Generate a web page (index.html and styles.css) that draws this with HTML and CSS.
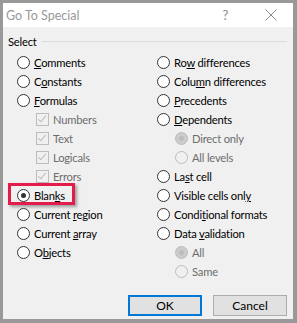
FILE: index.html
```html
<!DOCTYPE html>
<html lang="en">
<head>
    <meta charset="UTF-8">
    <title>Go To Special</title>
    <link rel="stylesheet" href="styles.css">
</head>
<body>
    <div class="window">
        <div class="titlebar">
            <span class="title">Go To Special</span>
            <span class="help">?</span>
            <svg class="close" width="12" height="12" viewBox="0 0 12 12">
                <path d="M0.5 0.5 L11.5 11.5 M11.5 0.5 L0.5 11.5" stroke="#8a8a8a" stroke-width="1" fill="none"/>
            </svg>
        </div>
        <div class="content">
            <div class="group-head">
                <span>Select</span>
                <div class="rule"></div>
            </div>
            <div class="columns">
                <div class="col left">
                    <div class="row"><span class="radio"></span><span><u>C</u>omments</span></div>
                    <div class="row"><span class="radio"></span><span>C<u>o</u>nstants</span></div>
                    <div class="row"><span class="radio"></span><span><u>F</u>ormulas</span></div>
                    <div class="row sub disabled"><span class="check"></span><span>Numbers</span></div>
                    <div class="row sub disabled"><span class="check"></span><span>Text</span></div>
                    <div class="row sub disabled"><span class="check"></span><span>Logicals</span></div>
                    <div class="row sub disabled"><span class="check"></span><span>Errors</span></div>
                    <div class="row marked"><span class="radio on"></span><span>Blan<u>k</u>s</span><div class="highlight"></div></div>
                    <div class="row"><span class="radio"></span><span>Current <u>r</u>egion</span></div>
                    <div class="row"><span class="radio"></span><span>Current <u>a</u>rray</span></div>
                    <div class="row"><span class="radio"></span><span>O<u>b</u>jects</span></div>
                </div>
                <div class="col right">
                    <div class="row"><span class="radio"></span><span>Ro<u>w</u> differences</span></div>
                    <div class="row"><span class="radio"></span><span>Colu<u>m</u>n differences</span></div>
                    <div class="row"><span class="radio"></span><span><u>P</u>recedents</span></div>
                    <div class="row"><span class="radio"></span><span><u>D</u>ependents</span></div>
                    <div class="row sub disabled"><span class="radio on"></span><span>Direct only</span></div>
                    <div class="row sub disabled"><span class="radio"></span><span>All levels</span></div>
                    <div class="row"><span class="radio"></span><span>La<u>s</u>t cell</span></div>
                    <div class="row"><span class="radio"></span><span>Visible cells onl<u>y</u></span></div>
                    <div class="row"><span class="radio"></span><span>Condi<u>t</u>ional formats</span></div>
                    <div class="row"><span class="radio"></span><span>Data <u>v</u>alidation</span></div>
                    <div class="row sub disabled"><span class="radio on"></span><span>All</span></div>
                    <div class="row sub disabled"><span class="radio"></span><span>Same</span></div>
                </div>
            </div>
            <div class="buttons">
                <button class="btn default">OK</button>
                <button class="btn">Cancel</button>
            </div>
        </div>
    </div>
</body>
</html>
```

FILE: styles.css
```css
html, body {
    margin: 0;
    height: 100%;
}

body {
    background-color: #999999;
    font-family: Lato, "Noto Sans", sans-serif;
    font-size: 11.2px;
    letter-spacing: -0.2px;
    color: #000;
    overflow: hidden;
}

.window {
    margin: 3px 4px 0 3px;
    height: calc(100vh - 7px);
    background-color: #f0f0f0;
    display: flex;
    flex-direction: column;
}

.titlebar {
    height: 24px;
    background-color: #fff;
    display: flex;
    align-items: center;
    padding-left: 3px;
    flex-shrink: 0;
}

.title {
    color: #999999;
    font-size: 12.5px;
    letter-spacing: 0;
}

.help {
    margin-left: auto;
    color: #8a8a8a;
    font-size: 13px;
}

.close {
    margin: 0 16px 0 37px;
}

.content {
    flex: 1;
    display: flex;
    flex-direction: column;
    padding: 6px 6px 3px 5px;
}

.group-head {
    height: 16px;
    display: flex;
    align-items: center;
}

.rule {
    flex: 1;
    height: 1px;
    background-color: #dcdcdc;
    margin-left: 5px;
}

.columns {
    display: flex;
    margin-top: 4px;
    padding-left: 9px;
}

.col {
    display: flex;
    flex-direction: column;
}

.col.left {
    width: 140px;
}

.row {
    height: 19px;
    display: flex;
    align-items: center;
    gap: 4px;
    position: relative;
    white-space: nowrap;
}

.row.sub {
    padding-left: 19px;
}

.col.right .row.sub {
    padding-left: 18px;
}

.disabled {
    color: #6d6d6d;
}

.radio {
    width: 11px;
    height: 11px;
    border: 1px solid #333;
    border-radius: 50%;
    background-color: #fff;
    position: relative;
    flex-shrink: 0;
}

.radio.on::after {
    content: "";
    position: absolute;
    left: 3px;
    top: 3px;
    width: 5px;
    height: 5px;
    border-radius: 50%;
    background-color: #333;
}

.disabled .radio {
    border-color: #bcbcbc;
    background-color: #f0f0f0;
}

.disabled .radio.on {
    background-color: #cccccc;
}

.disabled .radio.on::after {
    background-color: #bcbcbc;
}

.check {
    width: 11px;
    height: 11px;
    border: 1px solid #bcbcbc;
    position: relative;
    flex-shrink: 0;
}

.check::after {
    content: "";
    position: absolute;
    left: 3px;
    top: 0px;
    width: 3px;
    height: 7px;
    border-right: 1px solid #bcbcbc;
    border-bottom: 1px solid #bcbcbc;
    transform: rotate(40deg);
}

.highlight {
    position: absolute;
    left: -9px;
    top: -3px;
    width: 61px;
    height: 16px;
    border: 3px solid #e31c4c;
    box-shadow: 2px 2px 3px rgba(0, 0, 0, 0.35);
}

.buttons {
    margin-top: auto;
    display: flex;
    justify-content: flex-end;
    gap: 11px;
}

.btn {
    width: 74px;
    height: 21px;
    padding: 0;
    font-family: Lato, "Noto Sans", sans-serif;
    font-size: 12px;
    background-color: #e1e1e1;
    border: 1px solid #adadad;
}

.btn.default {
    border: 2px solid #0078d7;
}
```
